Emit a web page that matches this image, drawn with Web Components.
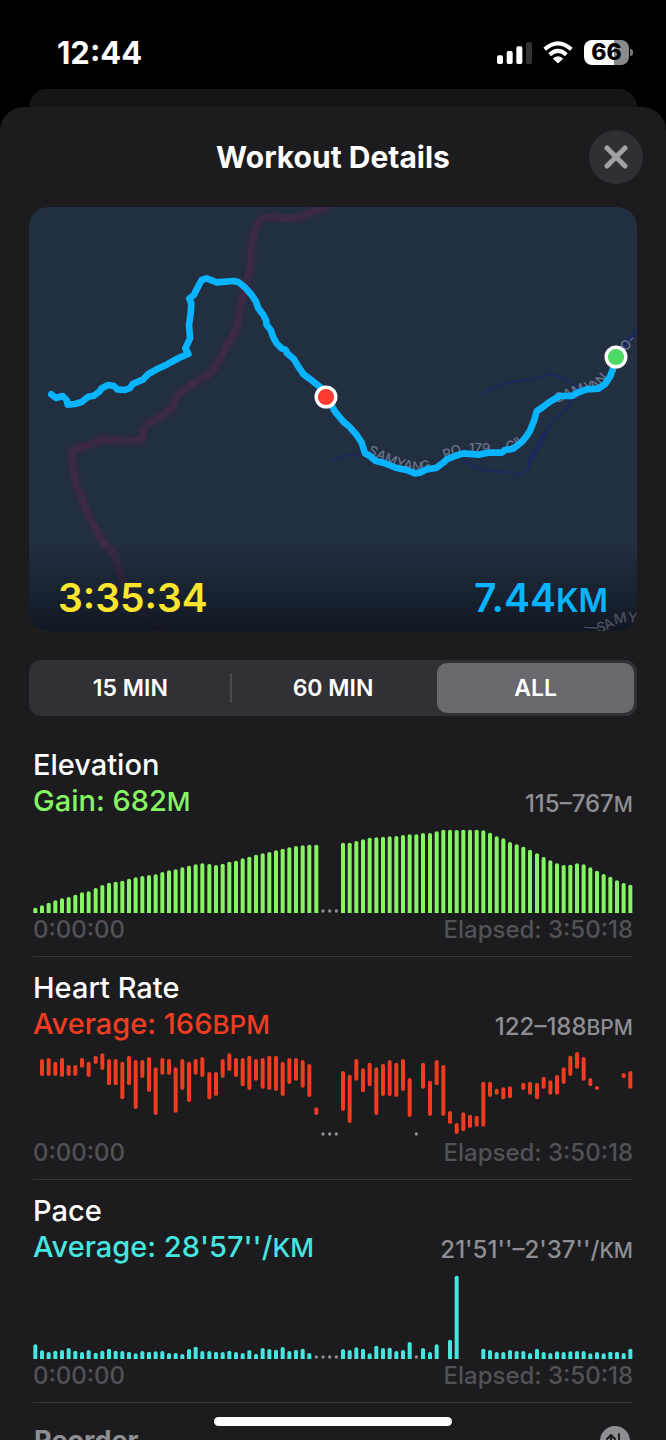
<!DOCTYPE html>
<html lang="en">
<head>
<meta charset="utf-8">
<meta name="viewport" content="width=device-width, initial-scale=1">
<title>Workout Details</title>
<style>
  html, body { margin: 0; height: 100%; background: #000; }
  body { font-family: Inter, "Noto Sans", sans-serif; color: #fff; overflow: hidden; }
</style>
</head>
<body>
<workout-screen></workout-screen>

<script>
class StatusBar extends HTMLElement {
  constructor() {
    super();
    this.attachShadow({ mode: 'open' }).innerHTML = `
      <style>
        :host { display: flex; justify-content: space-between; align-items: center; box-sizing: border-box; height: 89px; padding: 16px 33px 0 57px; }
        time { font-size: 31px; line-height: 36px; font-weight: 700; }
        .icons { display: flex; align-items: center; }
        svg { display: block; }
        .signal { margin-right: 11px; }
        .wifi { margin-right: 11px; }
        .battery { width: 45px; height: 25px; border-radius: 8px; background: linear-gradient(90deg, #fff 66%, #8a8a8a 66%); color: #000; font-size: 23px; line-height: 25px; font-weight: 800; text-align: center; }
        .nub { width: 3px; height: 7px; margin-left: 1px; border-radius: 0 3px 3px 0; background: #777; }
      </style>
      <time>12:44</time>
      <div class="icons">
        <svg class="signal" width="35" height="22" viewBox="0 0 105 66" aria-label="Signal" role="img">
          <g fill="#fff"><rect y="40" width="18" height="26" rx="5"/><rect x="29" y="27" width="18" height="39" rx="5"/><rect x="58" y="13" width="18" height="53" rx="5"/></g>
          <rect x="87" width="18" height="66" rx="5" fill="#333"/>
        </svg>
        <svg class="wifi" width="30" height="23" viewBox="0 0 90 69" aria-label="Wi-Fi" role="img">
          <g fill="none" stroke="#fff" stroke-width="12"><path d="M5 25Q45-11 85 25"/><path d="M20 41Q45 18 70 41"/></g>
          <path d="M45 66L31 53Q45 42 59 53Z" fill="#fff" stroke="#fff" stroke-width="3" stroke-linejoin="round"/>
        </svg>
        <div class="battery">66</div><div class="nub"></div>
      </div>`;
  }
}
customElements.define('status-bar', StatusBar);

class SheetHeader extends HTMLElement {
  constructor() {
    super();
    this.attachShadow({ mode: 'open' }).innerHTML = `
      <style>
        :host { display: grid; grid-template-columns: 54px 1fr 54px; align-items: center; padding: 23px 23px 0; }
        h1 { grid-column: 2; margin: 0; text-align: center; font-size: 30px; line-height: 54px; font-weight: 700; }
        button { width: 54px; height: 54px; padding: 0; border: 0; border-radius: 50%; background: #303034; display: grid; place-items: center; }
      </style>
      <h1><slot></slot></h1>
      <button aria-label="Close"><svg width="24" height="24" viewBox="0 0 24 24"><path d="M3 3L21 21M21 3L3 21" stroke="#a1a1a9" stroke-width="5" stroke-linecap="round"/></svg></button>`;
  }
}
customElements.define('sheet-header', SheetHeader);

class RouteMap extends HTMLElement {
  constructor() {
    super();
    this.attachShadow({ mode: 'open' }).innerHTML = `
      <style>
        :host { position: relative; display: flex; align-items: flex-end; justify-content: space-between; box-sizing: border-box; height: 424px; margin: 23px 29px 0; padding: 0 29px 8px; border-radius: 20px; overflow: hidden; background: #222f41; }
        svg { position: absolute; inset: 0; width: 100%; height: 100%; }
        .shade { position: absolute; inset: 336px 0 0; background: linear-gradient(#222f4100, #111823); }
        .value { position: relative; height: 50px; font-size: 39px; line-height: 50px; font-weight: 600; }
        .time { color: #ffe42e; }
        .distance { color: #08b4ff; }
        small { font-size: 32px; line-height: 0; }
        text { font: 500 40px Inter, sans-serif; fill: #69728a; stroke: none; }
        .corner { font-size: 14px; fill: #4a5160; }
      </style>
      <svg viewBox="29 207 608 424" preserveAspectRatio="xMidYMid slice" aria-hidden="true">
        <defs><filter id="soft" x="-10%" y="-10%" width="120%" height="120%"><feGaussianBlur stdDeviation="3"/></filter></defs>
        <g transform="translate(20 200) scale(.33333)" fill="none" stroke-linejoin="round" stroke-linecap="round">
          <g filter="url(#soft)" stroke="#4b2548">
            <path id="b" opacity=".4" stroke-width="24" d="M940 12L880 35L840 52L800 55L755 50L722 58L710 75L700 110L692 150L692 200L680 240L668 290L658 340L648 390L620 440L590 495L575 518L540 538L490 570L470 590L455 625L430 645L385 670L370 690L365 720L330 723L250 718L155 752L158 800L170 855L200 935L245 1020L285 1065L300 1120L350 1220L410 1270L460 1300"/>
            <use href="#b" stroke-width="10"/>
          </g>
          <g stroke="#1b2859" stroke-width="7">
            <path d="M1395 578Q1430 555 1475 546L1530 540L1590 522Q1610 520 1675 565Q1655 605 1640 625L1602 660L1570 710L1530 770" />
            <path d="M942 780Q980 760 1035 765M1330 780Q1370 805 1400 812L1488 818L1502 825L1528 805L1532 770M1502 825L1490 835"/>
            <path stroke-width="15" d="M1575 700L1530 782M1790 460L1860 385"/>
          </g>
          <path id="s1" d="M1042 760L1075 777Q1150 814 1200 814Q1250 806 1285 774L1330 757L1445 760Q1500 750 1545 700"/>
          <text><textPath href="#s1">SAMYANG</textPath></text>
          <text><textPath href="#s1" startOffset="252">RO</textPath></text>
          <text><textPath href="#s1" startOffset="328">179</textPath></text>
          <text><textPath href="#s1" startOffset="428">-GIL</textPath></text>
          <path id="s2" d="M1612 610Q1650 592 1690 578L1730 568Q1760 545 1775 515L1800 470L1822 450L1880 395"/>
          <text><textPath href="#s2">SAMYAN</textPath></text>
          <text><textPath href="#s2" startOffset="268">O-</textPath></text>
          <path stroke="#08b4ff" stroke-width="20" d="M94 583L108 594L128 588L140 600L143 614L165 612L185 606L205 590L222 587L238 575L245 565L265 555L282 558L292 568L315 570L330 564L338 552L370 538L385 522L410 508L440 494L465 480L480 472L505 462L496 445L510 415L507 375L512 340L514 310L508 296L522 284L534 260L545 240L560 235L590 247L640 243L655 246L675 262L695 285L708 305L715 325L730 345L738 360L740 375L752 390L760 412L770 430L785 445L798 450L800 458L822 478L835 500L850 522L880 545L905 565L920 588L945 635L970 665L990 682L1010 705L1025 728L1035 760L1050 768L1065 782L1095 790L1130 804L1160 810L1185 820L1200 818L1220 808L1248 804L1270 788L1280 778L1305 768L1330 760L1375 764L1405 758L1445 758L1455 750L1480 746L1505 726L1520 708L1530 692L1542 662L1550 634L1570 620L1590 605L1620 588L1655 588L1675 577L1700 568L1735 566L1755 552L1770 530L1778 510L1787 472"/>
        </g>
      </svg>
      <div class="shade"></div>
      <svg viewBox="29 207 608 424" preserveAspectRatio="xMidYMid slice" aria-hidden="true">
        <g stroke="#fff" stroke-width="3.4"><circle cx="326" cy="397" r="9.8" fill="#ff3b30"/><circle cx="616" cy="357" r="9.8" fill="#4cd964"/></g>
        <path id="s3" fill="none" d="M584 632Q602 636 617 624Q630 620 650 626"/>
        <text class="corner"><textPath href="#s3">—SAMY</textPath></text>
      </svg>
      <div class="value time">3:35:34</div>
      <div class="value distance">7.44<small>KM</small></div>`;
  }
}
customElements.define('route-map', RouteMap);

class RangePicker extends HTMLElement {
  constructor() {
    super();
    this.attachShadow({ mode: 'open' }).innerHTML = `
      <style>
        :host { display: grid; grid-template-columns: repeat(3, 1fr); height: 56px; margin: 29px 29px 0; border-radius: 12px; background: #303035; }
        label { position: relative; display: grid; font-size: 23px; line-height: 50px; font-weight: 600; text-align: center; padding: 3px; }
        input { position: absolute; inset: 0; margin: 0; opacity: 0; }
        span { border-radius: 10px; }
        input:checked + span { background: #68686e; }
        label:first-of-type { background: linear-gradient(#4a4a50, #4a4a50) right center / 2px 30px no-repeat; }
      </style>
      <label><input type="radio" name="range"><span>15 MIN</span></label>
      <label><input type="radio" name="range"><span>60 MIN</span></label>
      <label><input type="radio" name="range" checked><span>ALL</span></label>`;
  }
}
customElements.define('range-picker', RangePicker);

/* Chart samples are spans [from, to] measured down from the top of a 252-unit plot.
   A dot marks a pause, null an empty slot. */
const DOT = 'dot';
const BASE = 252;
const fromHeights = list => list.map(v => (typeof v === 'number' ? [BASE - v, BASE] : v));
const SERIES = {
  elevation: fromHeights([
    16,23,31,38,44,48,55,62,65,75,84,91,94,97,103,107,111,114,116,123,128,131,137,142,146,149,147,144,148,154,157,164,169,175,179,183,188,193,197,201,203,205,205,
    DOT,DOT,DOT,
    211,211,216,221,226,227,229,230,231,234,236,236,240,240,245,250,250,249,250,250,250,248,241,230,224,213,206,199,190,179,168,158,149,144,145,149,146,137,127,117,109,98,90,85]),
  heart: [
    null,[21,72],[18,72],[29,72],[18,75],[39,72],[39,72],[18,47],[29,75],[11,36],[4,54],[21,100],[21,100],[29,142],[11,100],[24,171],[24,78],[15,120],[46,189],[18,68],[21,68],[46,182],[21,114],[29,150],[21,68],[15,75],[60,142],[60,132],[21,78],[4,57],[18,75],[18,103],[11,114],[21,86],[18,110],[11,114],[11,117],[29,132],[18,96],[18,86],[24,107],[36,135],[166,189],
    DOT,DOT,DOT,
    [57,177],[68,213],[21,86],[49,121],[32,103],[46,189],[35,132],[24,132],[32,135],[21,117],[78,195],DOT,[32,110],[86,192],[24,100],[39,192],[177,216],[213,246],[181,238],[188,228],[191,224],[89,224],[89,135],[110,128],[106,142],[103,139],null,[92,114],[89,128],[92,142],[74,110],[85,128],[68,128],[46,96],[11,72],[0,50],[15,86],[78,103],[102,114],null,null,null,[63,79],[57,110]],
  pace: fromHeights([
    44,26,21,25,27,33,25,21,27,19,25,31,25,24,22,17,24,22,23,24,18,18,15,30,37,24,24,22,21,25,21,18,27,16,33,30,28,36,24,28,31,18,
    DOT,DOT,DOT,DOT,
    30,27,35,31,17,40,33,34,24,27,51,DOT,33,21,44,null,58,250,null,null,null,31,27,21,21,27,24,24,18,31,21,18,23,21,23,24,24,17,21,17,22,22,18,31])
};

class MetricChart extends HTMLElement {
  connectedCallback() {
    const name = this.getAttribute('series');
    const round = name === 'heart';
    const marks = SERIES[name].map((s, i) => {
      const x = Math.round(7 + i * 20.06);
      if (s === null) return '';
      if (s === DOT) return `<circle class="dot" cx="${x}" cy="246" r="5"/>`;
      const [a, b] = s;
      return round
        ? `<rect x="${x - 6}" y="${a}" width="12" height="${b - a}" rx="6"/>`
        : `<path d="M${x - 6} ${b}V${a + 5}q0-5 6-5t6 5V${b}Z"/>`;
    }).join('');
    const root = this.shadowRoot || this.attachShadow({ mode: 'open' });
    root.innerHTML = `
      <style>
        :host { display: block; height: 84px; }
        svg { display: block; width: 100%; height: 100%; fill: currentColor; }
        .dot { fill: #8e8e93; }
      </style>
      <svg viewBox="0 0 1800 252" preserveAspectRatio="none" role="img" aria-label="${name} chart">${marks}</svg>`;
  }
}
customElements.define('metric-chart', MetricChart);

class MetricSection extends HTMLElement {
  connectedCallback() {
    const root = this.shadowRoot || this.attachShadow({ mode: 'open' });
    root.innerHTML = `
      <style>
        :host { display: block; margin: 0 33px; padding: 13px 0 9px; border-bottom: 1px solid #38383a; }
        h2 { margin: 0; font-size: 29px; line-height: 36px; font-weight: 500; }
        .row { display: flex; justify-content: space-between; align-items: flex-end; height: 36px; }
        .value { font-size: 29px; line-height: 36px; font-weight: 500; color: var(--tint); }
        .range { font-size: 24px; line-height: 30px; font-weight: 500; color: #8e8e93; }
        metric-chart { margin-top: 10px; color: var(--tint); }
        .foot { height: 34px; color: #525256; font-size: 24px; line-height: 34px; font-weight: 500; }
      </style>
      <h2><slot></slot></h2>
      <div class="row"><div class="value"><slot name="value"></slot></div><div class="range"><slot name="range"></slot></div></div>
      <metric-chart series="${this.getAttribute('series')}"></metric-chart>
      <div class="row foot"><span>0:00:00</span><span>Elapsed: 3:50:18</span></div>`;
  }
}
customElements.define('metric-section', MetricSection);

class ReorderButton extends HTMLElement {
  constructor() {
    super();
    this.attachShadow({ mode: 'open' }).innerHTML = `
      <style>
        :host { display: block; padding: 19px 34px 0; }
        button { display: flex; justify-content: space-between; align-items: center; width: 100%; padding: 0 2px 0 0; border: 0; background: none; color: #8e8e93; font: inherit; font-size: 27px; line-height: 38px; font-weight: 700; }
        svg { display: block; }
      </style>
      <button><span>Reorder</span>
        <svg width="30" height="30" viewBox="0 0 30 30"><circle cx="15" cy="15" r="15" fill="#8e8e93"/><path d="M11 22V9M7 13L11 9L15 13M19 8V21M15 17L19 21L23 17" fill="none" stroke="#1c1c1e" stroke-width="2" stroke-linecap="round" stroke-linejoin="round"/></svg>
      </button>`;
  }
}
customElements.define('reorder-button', ReorderButton);

class WorkoutScreen extends HTMLElement {
  constructor() {
    super();
    this.attachShadow({ mode: 'open' }).innerHTML = `
      <style>
        :host { display: flex; flex-direction: column; height: 100vh; overflow: hidden; }
        status-bar, .behind { flex: none; }
        .behind { height: 18px; margin: 0 29px; border-radius: 18px 18px 0 0; background: #141416; }
        main { flex: 1; min-height: 0; overflow: hidden; border-radius: 24px 24px 0 0; background: #1c1c1e; }
        range-picker { margin-bottom: 18px; }
        small { line-height: 0; }
        [slot="value"] small { font-size: 26px; }
        [slot="range"] small { font-size: 21px; }
        .home { position: fixed; bottom: 14px; left: 50%; width: 238px; height: 9px; transform: translateX(-50%); border-radius: 5px; background: #fff; }
      </style>
      <status-bar></status-bar>
      <div class="behind"></div>
      <main>
        <sheet-header>Workout Details</sheet-header>
        <route-map></route-map>
        <range-picker></range-picker>
        <metric-section series="elevation" style="--tint:#86f564">Elevation<span slot="value">Gain: 682<small>M</small></span><span slot="range">115–767<small>M</small></span></metric-section>
        <metric-section series="heart" style="--tint:#f03c20">Heart Rate<span slot="value">Average: 166<small>BPM</small></span><span slot="range">122–188<small>BPM</small></span></metric-section>
        <metric-section series="pace" style="--tint:#46e5e0">Pace<span slot="value">Average: 28'57''/<small>KM</small></span><span slot="range">21'51''–2'37''/<small>KM</small></span></metric-section>
        <reorder-button></reorder-button>
      </main>
      <div class="home"></div>`;
  }
}
customElements.define('workout-screen', WorkoutScreen);
</script>
</body>
</html>
